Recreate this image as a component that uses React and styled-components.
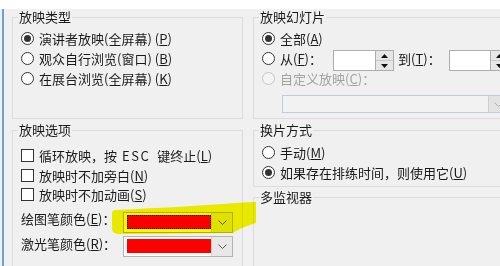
import React from "react";
import styled, { createGlobalStyle, css } from "styled-components";

const Global = createGlobalStyle`
  html, body { margin: 0; padding: 0; }
  body {
    background: #f0f0f0;
    font-family: "Noto Sans CJK SC", "Noto Sans", sans-serif;
    font-size: 13px;
    color: #1a1a1a;
    overflow: hidden;
  }
`;

const Frame = styled.div`
  position: relative;
  width: 500px;
  height: 266px;
  overflow: hidden;
  display: flex;
  background: #f0f0f0;
`;

const Edge = styled.div`
  width: 2px;
  margin-left: 2px;
  background: #6d9fda;
  flex: none;
`;

const Main = styled.div`
  flex: 1;
  display: flex;
  flex-direction: column;
  min-width: 0;
`;

const TopStrip = styled.div`
  height: 9px;
  background: #ffffff;
  margin-left: -4px;
  flex: none;
`;

const Columns = styled.div`
  display: grid;
  grid-template-columns: 231px 260px;
  column-gap: 10px;
  padding-left: 8px;
`;

const Column = styled.div`
  display: flex;
  flex-direction: column;
`;

const Group = styled.fieldset`
  margin: ${(p) => p.$gap || 0}px 0 0 0;
  padding: 0;
  border: 1px solid #dcdcdc;
  box-sizing: border-box;
  height: ${(p) => p.$h}px;
  min-width: 0;
`;

const Legend = styled.legend`
  margin-left: 5px;
  padding: 0 1px;
  line-height: 16px;
  font-size: 13px;
  color: #1a1a1a;
`;

const Body = styled.div`
  padding: ${(p) => p.$top || 3}px 8px 0 8px;
  display: flex;
  flex-direction: column;
`;

const Row = styled.div`
  height: ${(p) => p.$h || 20}px;
  display: flex;
  align-items: center;
  white-space: nowrap;
  color: ${(p) => (p.$disabled ? "#a2a2a2" : "#1a1a1a")};
`;

const RadioCircle = styled.span`
  width: 13px;
  height: 13px;
  box-sizing: border-box;
  border-radius: 50%;
  border: 1px solid ${(p) => (p.$disabled ? "#c4c4c4" : "#333333")};
  background: ${(p) => (p.$disabled ? "#f4f4f4" : "#ffffff")};
  display: flex;
  align-items: center;
  justify-content: center;
  margin-right: 5px;
  flex: none;
  ${(p) =>
    p.$checked &&
    css`
      &::after {
        content: "";
        width: 7px;
        height: 7px;
        border-radius: 50%;
        background: #333333;
      }
    `}
`;

const CheckBox = styled.span`
  width: 13px;
  height: 13px;
  box-sizing: border-box;
  border: 1px solid #333333;
  background: #ffffff;
  margin-right: 5px;
  flex: none;
`;

const Mnemonic = styled.span`
  margin-left: ${(p) => p.$sp || 0}px;
`;

const Key = styled.u`
  text-decoration: underline;
  text-underline-offset: 1px;
`;

const Esc = styled.span`
  letter-spacing: 1.5px;
  margin: 0 7px 0 5px;
`;

const FieldLabel = styled.span`
  width: ${(p) => p.$w}px;
  flex: none;
  margin-left: ${(p) => p.$ml || 0}px;
`;

const Spin = styled.div`
  display: flex;
  align-self: flex-start;
  margin-top: 2px;
  height: 21px;
`;

const SpinField = styled.div`
  width: ${(p) => p.$w}px;
  box-sizing: border-box;
  border: 1px solid #abadb3;
  background: #ffffff;
`;

const SpinButtons = styled.div`
  width: 18px;
  box-sizing: border-box;
  border: 1px solid #acacac;
  border-left: none;
  display: flex;
  flex-direction: column;
`;

const SpinHalf = styled.div`
  flex: 1;
  background: #e6e6e6;
  display: flex;
  align-items: center;
  justify-content: center;
  & + & {
    border-top: 1px solid #c8c8c8;
  }
`;

const Tri = ({ down }) => (
  <svg width="7" height="4" viewBox="0 0 7 4">
    <path d={down ? "M0 0 H7 L3.5 4 Z" : "M0 4 H7 L3.5 0 Z"} fill="#111" />
  </svg>
);

const Chevron = ({ color }) => (
  <svg width="9" height="5" viewBox="0 0 9 5">
    <path d="M0.5 0.5 L4.5 4.5 L8.5 0.5" fill="none" stroke={color} strokeWidth="1" />
  </svg>
);

const ShowCombo = styled.div`
  margin: 7px 0 0 20px;
  width: 226px;
  height: 18px;
  box-sizing: border-box;
  border: 1px solid #bccde3;
  background: #f2f2f2;
  display: flex;
  justify-content: flex-end;
`;

const ComboButton = styled.div`
  width: ${(p) => p.$w}px;
  flex: none;
  align-self: stretch;
  display: flex;
  align-items: center;
  justify-content: center;
  background: ${(p) => p.$bg};
  border-left: 1px solid ${(p) => p.$line};
  margin-left: auto;
`;

const ColorRows = styled.div`
  margin-top: 7px;
  display: flex;
  flex-direction: column;
  gap: 3px;
`;

const ColorRow = styled.div`
  display: flex;
  align-items: flex-start;
  white-space: nowrap;
`;

const ColorLabel = styled.span`
  width: 102px;
  flex: none;
  line-height: 16px;
  margin-top: ${(p) => p.$mt}px;
`;

const ColorCombo = styled.div`
  width: 110px;
  height: 21px;
  box-sizing: border-box;
  border: 1px solid #b4b4b4;
  background: #ffffff;
  display: flex;
  align-items: center;
`;

const Swatch = styled.div`
  width: 84px;
  height: 14px;
  margin-left: 3px;
  box-sizing: border-box;
  background: #ff0000;
  border: 1px ${(p) => (p.$focus ? "dotted #222" : "solid #ff0000")};
`;

const Highlight = styled.svg`
  position: absolute;
  left: 0;
  top: 0;
  pointer-events: none;
  mix-blend-mode: multiply;
`;

const K = ({ c, sp }) => (
  <Mnemonic $sp={sp}>
    (<Key>{c}</Key>)
  </Mnemonic>
);

export default function App() {
  return (
    <>
      <Global />
      <Frame>
        <Edge />
        <Main>
          <TopStrip />
          <Columns>
            <Column>
              <Group $h={110}>
                <Legend>放映类型</Legend>
                <Body $top={3}>
                  <Row>
                    <RadioCircle $checked />
                    演讲者放映(全屏幕)<K c="P" sp={3} />
                  </Row>
                  <Row>
                    <RadioCircle />
                    观众自行浏览(窗口)<K c="B" sp={3} />
                  </Row>
                  <Row>
                    <RadioCircle />
                    在展台浏览(全屏幕)<K c="K" sp={3} />
                  </Row>
                </Body>
              </Group>
              <Group $gap={3} $h={200}>
                <Legend>放映选项</Legend>
                <Body $top={8}>
                  <Row $h={19.5}>
                    <CheckBox />
                    循环放映，按<Esc>ESC</Esc>键终止<K c="L" />
                  </Row>
                  <Row $h={19.5}>
                    <CheckBox />
                    放映时不加旁白<K c="N" />
                  </Row>
                  <Row $h={19.5}>
                    <CheckBox />
                    放映时不加动画<K c="S" />
                  </Row>
                  <ColorRows>
                    <ColorRow>
                      <ColorLabel $mt={-1}>
                        绘图笔颜色<K c="E" />：
                      </ColorLabel>
                      <ColorCombo>
                        <Swatch $focus />
                        <ComboButton $w={20} $bg="#e8e8e8" $line="#d2d2d2">
                          <Chevron color="#555" />
                        </ComboButton>
                      </ColorCombo>
                    </ColorRow>
                    <ColorRow>
                      <ColorLabel $mt={0}>
                        激光笔颜色<K c="R" />：
                      </ColorLabel>
                      <ColorCombo>
                        <Swatch />
                        <ComboButton $w={20} $bg="#e8e8e8" $line="#d2d2d2">
                          <Chevron color="#555" />
                        </ComboButton>
                      </ColorCombo>
                    </ColorRow>
                  </ColorRows>
                </Body>
              </Group>
            </Column>
            <Column>
              <Group $h={110}>
                <Legend>放映幻灯片</Legend>
                <Body $top={3}>
                  <Row>
                    <RadioCircle $checked />
                    全部<K c="A" />
                  </Row>
                  <Row>
                    <RadioCircle />
                    <FieldLabel $w={53}>
                      从<K c="F" />：
                    </FieldLabel>
                    <Spin>
                      <SpinField $w={43} />
                      <SpinButtons>
                        <SpinHalf>
                          <Tri />
                        </SpinHalf>
                        <SpinHalf>
                          <Tri down />
                        </SpinHalf>
                      </SpinButtons>
                    </Spin>
                    <FieldLabel $w={51} $ml={4}>
                      到<K c="T" />：
                    </FieldLabel>
                    <Spin>
                      <SpinField $w={42} />
                      <SpinButtons>
                        <SpinHalf>
                          <Tri />
                        </SpinHalf>
                        <SpinHalf>
                          <Tri down />
                        </SpinHalf>
                      </SpinButtons>
                    </Spin>
                  </Row>
                  <Row $disabled>
                    <RadioCircle $disabled />
                    自定义放映<K c="C" />：
                  </Row>
                  <ShowCombo>
                    <ComboButton $w={18} $bg="#e3e3e3" $line="#cfcfcf">
                      <Chevron color="#b0b0b0" />
                    </ComboButton>
                  </ShowCombo>
                </Body>
              </Group>
              <Group $gap={3} $h={65}>
                <Legend>换片方式</Legend>
                <Body $top={4}>
                  <Row>
                    <RadioCircle />
                    手动<K c="M" />
                  </Row>
                  <Row>
                    <RadioCircle $checked />
                    如果存在排练时间，则使用它<K c="U" />
                  </Row>
                </Body>
              </Group>
              <Group $gap={2} $h={120}>
                <Legend>多监视器</Legend>
              </Group>
            </Column>
          </Columns>
        </Main>
        <Highlight width="500" height="266" viewBox="0 0 500 266">
          <path
            d="M112,213 Q112,210 116,210 C160,208 210,205 252,202 L256,202 L256,223 C245,226 238,230 233,233 L120,234 C115,234 112,232 112,229 Z"
            fill="#f8f800"
          />
        </Highlight>
      </Frame>
    </>
  );
}
